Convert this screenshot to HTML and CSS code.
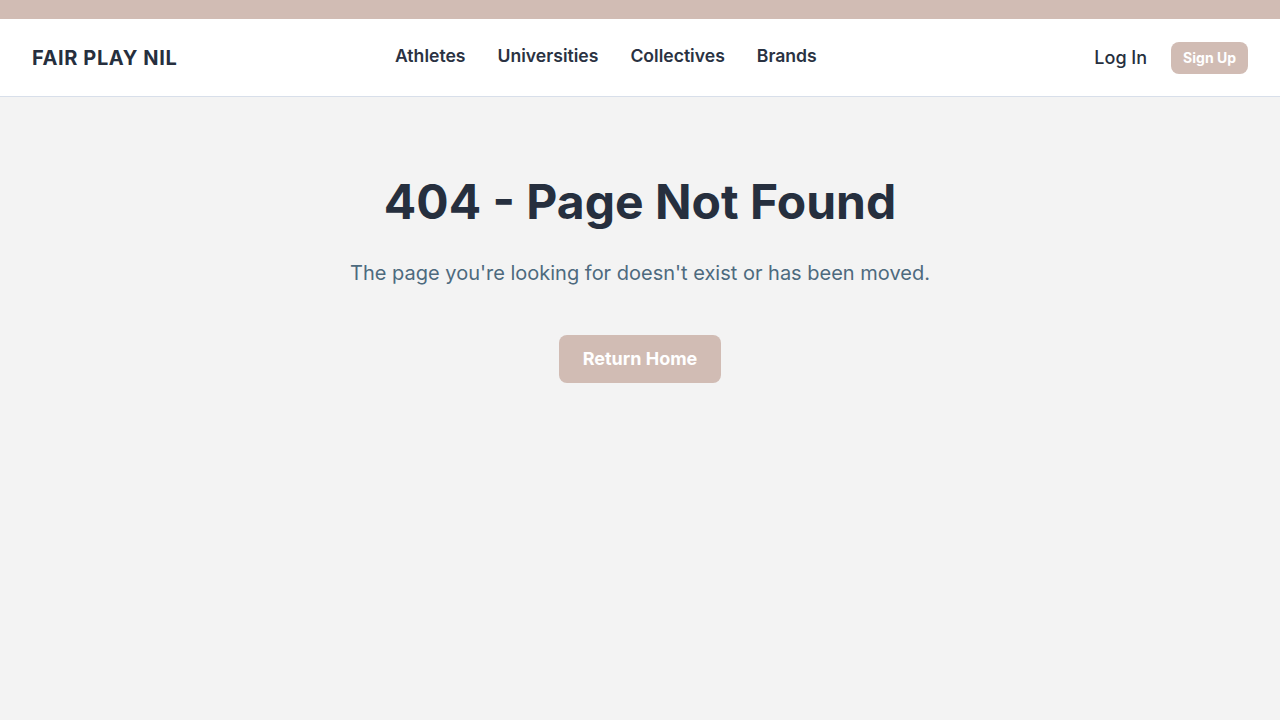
FILE: index.html
```html
<!DOCTYPE html>
<html lang="en">
<head>
<meta charset="utf-8">
<title>404 - Page Not Found | Fair Play NIL</title>
<link rel="stylesheet" href="styles.css">
</head>
<body>
<div class="topbar"></div>
<header class="header">
  <div class="brand">FAIR PLAY NIL</div>
  <nav class="nav">
    <a href="#">Athletes</a>
    <a href="#">Universities</a>
    <a href="#">Collectives</a>
    <a href="#">Brands</a>
  </nav>
  <div class="actions">
    <a class="login" href="#">Log In</a>
    <a class="signup" href="#">Sign Up</a>
  </div>
</header>
<main class="main">
  <h1 class="title">404 - Page Not Found</h1>
  <p class="subtitle">The page you're looking for doesn't exist or has been moved.</p>
  <a class="home-btn" href="#">Return Home</a>
</main>
</body>
</html>
```

FILE: styles.css
```css
* { box-sizing: border-box; }
html, body { margin: 0; padding: 0; }
body {
  font-family: Inter, "Noto Sans", sans-serif;
  background: #f3f3f3;
  color: #262f3e;
  min-height: 720px;
}
a { text-decoration: none; color: inherit; }
.topbar { height: 19px; background: #d1bcb4; }
.header {
  height: 78px;
  background: #fff;
  border-bottom: 1px solid #d8dfea;
  display: flex;
  align-items: center;
  padding: 0 32px;
}
.brand {
  width: 363px;
  font-size: 20px;
  font-weight: 700;
  letter-spacing: 0.6px;
  color: #262f3e;
}
.nav {
  display: flex;
  gap: 32px;
  margin-top: -5px;
}
.nav a {
  font-size: 17.6px;
  font-weight: 600;
  color: #2a3242;
}
.actions {
  margin-left: auto;
  display: flex;
  align-items: center;
  gap: 24px;
}
.login {
  font-size: 18px;
  font-weight: 500;
  color: #262f3e;
}
.signup {
  background: #d1bcb4;
  color: #fff;
  font-size: 14px;
  font-weight: 700;
  padding: 0 12px;
  height: 32px;
  line-height: 32px;
  border-radius: 8px;
}
.main {
  display: flex;
  flex-direction: column;
  align-items: center;
  padding-top: 74px;
}
.title {
  margin: 0;
  font-size: 48px;
  font-weight: 700;
  line-height: 62px;
  color: #262f3e;
}
.subtitle {
  margin: 26px 0 0;
  font-size: 20px;
  line-height: 28px;
  color: #4d6a7e;
}
.home-btn {
  margin-top: 48px;
  background: #d1bcb4;
  color: #fff;
  font-size: 18px;
  font-weight: 700;
  height: 48px;
  line-height: 48px;
  padding: 0 24px;
  border-radius: 8px;
}
```
